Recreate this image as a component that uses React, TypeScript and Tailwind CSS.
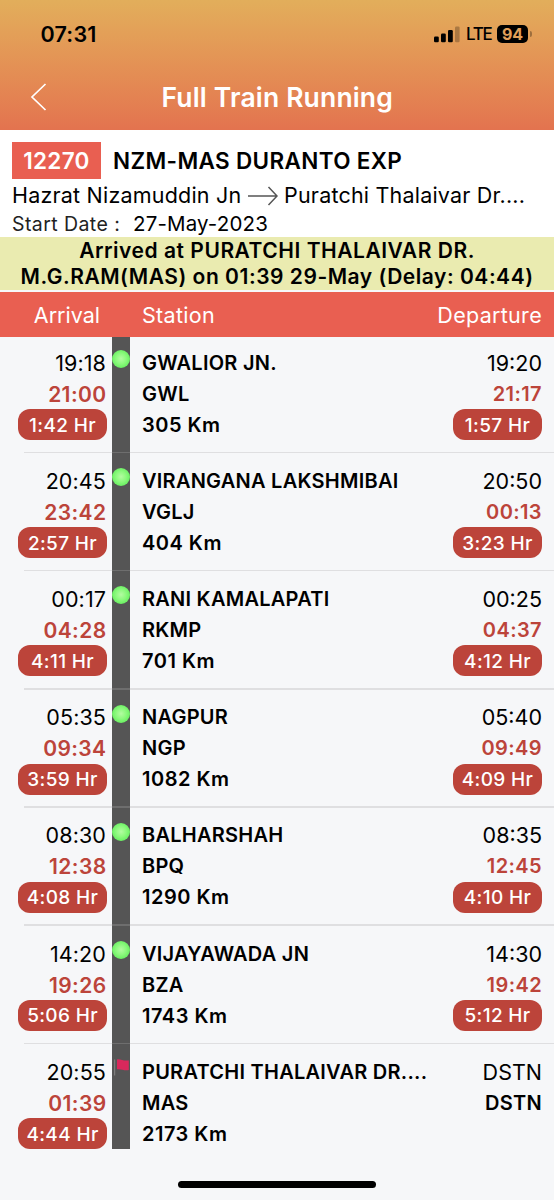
import clsx from 'clsx'

// ── Types ─────────────────────────────────────────────────
type Stop = {
  name: string
  code: string
  km: string
  arrival: string
  actualArrival: string
  arrivalDelay: string
  departure: string
  actualDeparture: string
  departureDelay?: string
}

// ── Stops ─────────────────────────────────────────────────
const stops: Stop[] = [
  { name: 'GWALIOR JN.', code: 'GWL', km: '305 Km', arrival: '19:18', actualArrival: '21:00', arrivalDelay: '1:42 Hr', departure: '19:20', actualDeparture: '21:17', departureDelay: '1:57 Hr' },
  { name: 'VIRANGANA LAKSHMIBAI', code: 'VGLJ', km: '404 Km', arrival: '20:45', actualArrival: '23:42', arrivalDelay: '2:57 Hr', departure: '20:50', actualDeparture: '00:13', departureDelay: '3:23 Hr' },
  { name: 'RANI KAMALAPATI', code: 'RKMP', km: '701 Km', arrival: '00:17', actualArrival: '04:28', arrivalDelay: '4:11 Hr', departure: '00:25', actualDeparture: '04:37', departureDelay: '4:12 Hr' },
  { name: 'NAGPUR', code: 'NGP', km: '1082 Km', arrival: '05:35', actualArrival: '09:34', arrivalDelay: '3:59 Hr', departure: '05:40', actualDeparture: '09:49', departureDelay: '4:09 Hr' },
  { name: 'BALHARSHAH', code: 'BPQ', km: '1290 Km', arrival: '08:30', actualArrival: '12:38', arrivalDelay: '4:08 Hr', departure: '08:35', actualDeparture: '12:45', departureDelay: '4:10 Hr' },
  { name: 'VIJAYAWADA JN', code: 'BZA', km: '1743 Km', arrival: '14:20', actualArrival: '19:26', arrivalDelay: '5:06 Hr', departure: '14:30', actualDeparture: '19:42', departureDelay: '5:12 Hr' },
  { name: 'PURATCHI THALAIVAR DR....', code: 'MAS', km: '2173 Km', arrival: '20:55', actualArrival: '01:39', arrivalDelay: '4:44 Hr', departure: 'DSTN', actualDeparture: 'DSTN' },
]

// ── Status bar ────────────────────────────────────────────
function StatusBar() {
  return (
    <div className="flex h-[68px] items-center justify-between pl-[40.5px] pr-[22px] text-black">
      <span className="text-[21.5px] font-semibold tracking-[0.2px]">07:31</span>
      <div className="flex items-center">
        <svg width="26" height="17" viewBox="0 0 26 17">
          <rect x="0" y="10.5" width="4.8" height="5.8" rx="1.3" />
          <rect x="7" y="7.5" width="4.8" height="8.8" rx="1.3" />
          <rect x="14" y="4" width="4.8" height="12.3" rx="1.3" />
          <rect x="21" y="0.5" width="4.6" height="15.8" rx="1.3" fillOpacity="0.25" />
        </svg>
        <span className="ml-[6px] w-[26px] whitespace-nowrap pt-[1px] text-[17px] font-medium tracking-[-1.3px]">LTE</span>
        <span className="ml-[5px] flex h-[18px] w-[31px] items-center justify-center rounded-[5px] bg-black text-[16px] font-bold text-[#e2a05a]">
          94
        </span>
        <span className="ml-[2px] h-[6px] w-[2px] rounded-r-full bg-black/30" />
      </div>
    </div>
  )
}

// ── Delay pill ────────────────────────────────────────────
function Delay({ text }: { text: string }) {
  return (
    <span className="-mt-[0.6px] flex h-[31px] w-[89px] items-center justify-center self-end rounded-[12px] bg-[#bc443a] pt-px text-[19px] font-medium tracking-[0.35px] text-white">
      {text}
    </span>
  )
}

// ── Marker on the rail ────────────────────────────────────
function Marker({ last }: { last: boolean }) {
  if (last) {
    return (
      <svg className="mt-[15px]" width="18" height="18" viewBox="0 0 18 18">
        <path d="M2.6 0.5V16.5" stroke="#7d7d7d" strokeWidth="1.2" />
        <path d="M5 0.4c3.6-.7 6.6 2 11.8 1v9.700c-4.500 1-7.600-1.500-11.800-.8z" fill="#d9295c" />
      </svg>
    )
  }
  return (
    <span className="mt-[15px] size-[18px] rounded-full bg-[radial-gradient(circle_at_50%_48%,#b4fba2_0%,#8cf97d_40%,#66ef5f_75%,#5bdc58_100%)]" />
  )
}

function StopRow({ stop, last }: { stop: Stop; last: boolean }) {
  return (
    <li className="relative flex h-[118.2px] text-[21px] leading-[31px]">
      <div className="flex w-[107px] flex-col pt-[12.6px] text-right">
        <span className="pr-[1px] text-[21.5px] tracking-[0.1px]">{stop.arrival}</span>
        <span className="pr-[0.5px] text-[21px] font-[560] tracking-[0.4px] text-[#bc443a]">{stop.actualArrival}</span>
        <Delay text={stop.arrivalDelay} />
      </div>

      <div className={clsx('ml-[5px] flex w-[18px] flex-col items-center bg-[#555]', last && 'h-[105px]')}>
        <Marker last={last} />
      </div>

      <div className="ml-[12px] flex flex-1 flex-col whitespace-nowrap pt-[12.6px] text-[20px] font-[560] tracking-[0.25px]">
        <span>{stop.name}</span>
        <span>{stop.code}</span>
        <span className="tracking-[0.5px]">{stop.km}</span>
      </div>

      <div className="mr-[12px] flex w-[89px] flex-col pt-[12.6px] text-right">
        <span className="text-[21.5px]">{stop.departure}</span>
        {stop.departureDelay ? (
          <>
            <span className="text-[20px] font-[560] tracking-[0.4px] text-[#bc443a]">{stop.actualDeparture}</span>
            <Delay text={stop.departureDelay} />
          </>
        ) : (
          <span className="text-[20px] font-semibold tracking-[0.3px]">{stop.actualDeparture}</span>
        )}
      </div>

      {/* Divider starts slightly inset and crosses the rail */}
      {!last && <span className="absolute bottom-0 left-[24px] right-0 h-[1.5px] bg-[#aaa]/30" />}
    </li>
  )
}

export default function App() {
  return (
    <div className="flex h-[1200px] w-[554px] flex-col overflow-hidden bg-[#f6f7f9] font-['Inter','Liberation_Sans',sans-serif] text-black">
      {/* Top bar */}
      <header className="h-[130px] shrink-0 bg-linear-to-b from-[#e2ae5b] to-[#e3734f]">
        <StatusBar />
        <div className="flex h-[58px] items-center">
          <svg className="ml-[30px]" width="17" height="28" viewBox="0 0 17 28" fill="none" stroke="#fff" strokeWidth="1.7">
            <path d="M15.500 1L2 14l13.500 13" />
          </svg>
          <h1 className="ml-[114.5px] whitespace-nowrap pt-px text-[26.5px] font-semibold tracking-[0.17px] text-white">Full Train Running</h1>
        </div>
      </header>

      {/* Train details */}
      <section className="h-[107px] shrink-0 bg-white pl-[12px] pt-[12px]">
        <div className="flex h-[37px] items-center">
          <span className="flex h-full w-[89px] items-center justify-center bg-[#e95f51] text-[22.5px] font-[560] tracking-[0.3px] text-white">12270</span>
          <span className="ml-[12px] whitespace-nowrap text-[22.5px] font-[560] tracking-[0.35px]">NZM-MAS DURANTO EXP</span>
        </div>
        <div className="flex h-[32px] items-center whitespace-nowrap pt-px text-[21.5px] tracking-[0.2px]">
          <span className="w-[236px]">Hazrat Nizamuddin Jn</span>
          <svg width="30" height="20" viewBox="0 0 30 20" fill="none" stroke="#555" strokeWidth="1.5">
            <path d="M0 10h28.500M20.500 1l8.500 9-8.500 9" />
          </svg>
          <span className="ml-[6px]">Puratchi Thalaivar Dr....</span>
        </div>
        <div className="flex h-[26px] items-center whitespace-nowrap pt-px">
          <span className="w-[121px] text-[19.5px] tracking-[0.42px] text-[#222]">Start Date :</span>
          <span className="text-[20.5px] tracking-[0.15px]">27-May-2023</span>
        </div>
      </section>

      <p className="h-[53px] shrink-0 whitespace-nowrap bg-[#eaebb0] pt-[1px] text-center text-[21px] font-[560] leading-[26px] tracking-[0.53px]">
        Arrived at PURATCHI THALAIVAR DR.
        <br />
        M.G.RAM(MAS) on 01:39 29-May (Delay: 04:44)
      </p>

      {/* Column titles */}
      <div className="relative z-10 mt-[2px] flex h-[45px] shrink-0 items-center bg-[#e95f51] pr-[12px] pt-[2px] text-[21.5px] tracking-[0.3px] text-white">
        <span className="w-[100px] text-right tracking-normal">Arrival</span>
        <span className="ml-[42px] flex-1">Station</span>
        <span>Departure</span>
      </div>

      <ul className="-mt-[2px]">
        {stops.map((stop, i) => (
          <StopRow key={stop.code} stop={stop} last={i === stops.length - 1} />
        ))}
      </ul>

      {/* Home indicator */}
      <div className="mx-auto mb-[12px] mt-auto h-[7px] w-[198px] rounded-full bg-black" />
    </div>
  )
}
